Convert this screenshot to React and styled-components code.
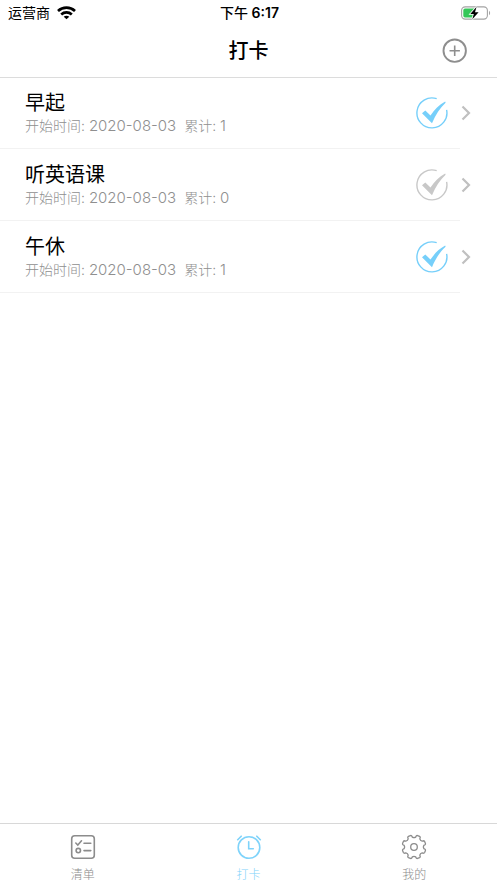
import React, { useState } from "react";
import styled, { createGlobalStyle } from "styled-components";

const GlobalStyle = createGlobalStyle`
  *, *::before, *::after { box-sizing: border-box; }
  body {
    margin: 0;
    background: #fff;
    color: #000;
    font-family: Inter, "Noto Sans CJK SC", sans-serif;
  }
  button { font: inherit; color: inherit; }
`;

const Screen = styled.div`
  display: flex;
  flex-direction: column;
  min-height: 100vh;
`;

const StatusBar = styled.div`
  display: grid;
  grid-template-columns: 1fr auto 1fr;
  align-items: center;
  height: 25px;
  padding: 0 6px 0 8px;
  font-size: 14px;
  line-height: 20px;
`;

const Carrier = styled.span`
  display: flex;
  align-items: center;
  gap: 7px;
`;

const Clock = styled.time`
  font-weight: 600;
  white-space: pre;
`;

const ClockPeriod = styled.span`
  font-weight: 500;
`;

const Battery = styled.span`
  display: flex;
  justify-content: flex-end;
`;

const Header = styled.header`
  display: grid;
  grid-template-columns: 1fr auto 1fr;
  align-items: center;
  height: 53px;
  padding: 0 29px;
  border-bottom: 1px solid #dcdcdc;
`;

const Title = styled.h1`
  grid-column: 2;
  margin: 0;
  font-size: 20px;
  line-height: 28px;
  font-weight: 500;
`;

const IconButton = styled.button`
  display: flex;
  justify-self: end;
  padding: 0;
  border: 0;
  background: none;
  color: ${(p) => p.$color};
  cursor: pointer;
`;

const List = styled.ul`
  flex: 1;
  margin: 0;
  padding: 0;
  list-style: none;
`;

const Item = styled.li`
  display: flex;
  align-items: center;
  height: 71px;
  margin-right: 37px;
  padding-left: 25px;
  border-bottom: 1px solid #f2f2f2;

  & + & { height: 72px; }
`;

const ItemText = styled.div`
  flex: 1;
  min-width: 0;
`;

const ItemName = styled.h2`
  margin: 0;
  font-size: 20px;
  line-height: 26px;
  font-weight: 400;
`;

const Meta = styled.p`
  display: flex;
  gap: 8px;
  margin: 0;
  color: #8f8f8f;
  font-size: 14px;
  line-height: 20px;
  font-weight: 300;
`;

const Value = styled.span`
  font-size: 15px;
`;

const Actions = styled.div`
  display: flex;
  align-items: center;
  gap: 12px;
  margin-right: -12px;
`;

const TabBar = styled.nav`
  display: flex;
  height: 60px;
  border-top: 1px solid #d8d8d8;
`;

const Tab = styled.button`
  display: flex;
  flex: 1;
  flex-direction: column;
  align-items: center;
  gap: 7px;
  padding: 10px 0 0;
  border: 0;
  background: none;
  color: ${(p) => (p.$active ? "#7fd3fa" : "#8c8c8c")};
  font-size: 12px;
  line-height: 16px;
  font-weight: 300;
  cursor: pointer;
`;

const WifiIcon = () => (
  <svg width="19" height="14" viewBox="0 0 19 14" fill="none" stroke="#000" strokeWidth="2.7" aria-hidden="true">
    <path d="M1 4.9C5.8.5 13.2.5 18 4.9" />
    <path d="M4.2 8.4c3-2.7 7.6-2.7 10.6 0" />
    <path d="M9.5 13.2 6.7 10.7c1.6-1.3 4-1.3 5.6 0z" fill="#000" stroke="none" />
  </svg>
);

const BatteryIcon = () => (
  <svg width="30" height="14" viewBox="0 0 30 14" aria-hidden="true">
    <rect x=".6" y=".9" width="25.8" height="12.2" rx="3.6" fill="none" stroke="#a3a3a3" strokeWidth="1.1" />
    <path d="M28 4.8c1.5.7 1.5 3.7 0 4.4z" fill="#a3a3a3" />
    <path d="M4 2.6h10v8.8H4A1.7 1.7 0 0 1 2.3 9.7V4.3A1.7 1.7 0 0 1 4 2.6z" fill="#35c759" />
    <path d="M15.6.8 9.3 8h3.5l-1.5 5.3L17.6 6.2H14z" fill="#000" stroke="#fff" strokeWidth="1.6" paintOrder="stroke" />
  </svg>
);

const PlusIcon = () => (
  <svg width="26" height="26" viewBox="0 0 26 26" fill="none" stroke="currentColor" aria-hidden="true">
    <circle cx="12.7" cy="12.7" r="11.2" strokeWidth="1.9" />
    <path d="M12.7 7.5v10.4M7.5 12.7h10.400" strokeWidth="1.6" />
  </svg>
);

const CheckIcon = () => (
  <svg width="32" height="32" viewBox="0 0 32 32" aria-hidden="true">
    <path d="M20.7 1.7A15 15 0 1 0 30.6 12.8" fill="none" stroke="currentColor" strokeWidth="1.4" />
    <path d="M6 16.2 9.3 13.6 14.5 18.6C18.5 12.5 23 8 29.2 4.6L29.6 5.7C24 10.8 19.5 17.6 16 26.2z" fill="currentColor" />
  </svg>
);

const ChevronIcon = () => (
  <svg width="12" height="16" viewBox="0 0 12 16" fill="none" stroke="currentColor" strokeWidth="2.2" aria-hidden="true">
    <path d="m2.500 1.500 6.500 6.500-6.500 6.500" />
  </svg>
);

const ListIcon = () => (
  <svg width="26" height="26" viewBox="0 0 26 26" fill="none" stroke="currentColor" strokeWidth="1.6" strokeLinecap="round" aria-hidden="true">
    <rect x="1.700" y="1.700" width="22.600" height="22.600" rx="3" />
    <path d="m5.800 9 2 2 3.700-4.200M14 9.300h6.800M14 16.600h6.800" />
    <circle cx="8.300" cy="16.600" r="2.200" />
  </svg>
);

const AlarmIcon = () => (
  <svg width="26" height="26" viewBox="0 0 26 26" fill="none" stroke="currentColor" strokeWidth="1.6" strokeLinecap="round" aria-hidden="true">
    <circle cx="13" cy="13.500" r="10.800" />
    <path d="M12.700 7.800v7h4.600M1.700 5.700l3.500-3.500M24.300 5.700l-3.500-3.500" />
  </svg>
);

const polar = (radius, degrees) => {
  const a = (degrees * Math.PI) / 180;
  return `${(13 + radius * Math.cos(a)).toFixed(2)} ${(13 + radius * Math.sin(a)).toFixed(2)}`;
};

const gearPath =
  Array.from({ length: 8 }, (_, i) => {
    const a = i * 45 + 22.5;
    return [
      `${i ? "L" : "M"}${polar(10, a - 13)}`,
      `L${polar(11.3, a - 11)}`,
      `Q${polar(12, a - 9)} ${polar(12, a - 5)}`,
      `L${polar(12, a + 5)}`,
      `Q${polar(12, a + 9)} ${polar(11.3, a + 11)}`,
      `L${polar(10, a + 13)}`,
      `Q${polar(8.8, a + 22.5)} ${polar(10, a + 32)}`,
    ].join("");
  }).join("") + "Z";

const GearIcon = () => (
  <svg width="26" height="26" viewBox="0 0 26 26" fill="none" stroke="currentColor" strokeWidth="1.3" strokeLinejoin="round" aria-hidden="true">
    <path d={gearPath} />
    <circle cx="13" cy="13" r="3.3" />
  </svg>
);

const initialHabits = [
  { name: "早起", start: "2020-08-03", total: 1, done: true },
  { name: "听英语课", start: "2020-08-03", total: 0, done: false },
  { name: "午休", start: "2020-08-03", total: 1, done: true },
];

const tabs = [
  { label: "清单", Icon: ListIcon },
  { label: "打卡", Icon: AlarmIcon },
  { label: "我的", Icon: GearIcon },
];

export default function App() {
  const [habits, setHabits] = useState(initialHabits);
  const [active, setActive] = useState("打卡");

  const toggle = (name) =>
    setHabits((all) =>
      all.map((h) =>
        h.name === name ? { ...h, done: !h.done, total: h.total + (h.done ? -1 : 1) } : h
      )
    );

  return (
    <Screen>
      <GlobalStyle />
      <StatusBar>
        <Carrier>运营商<WifiIcon /></Carrier>
        <Clock><ClockPeriod>下午</ClockPeriod> 6:17</Clock>
        <Battery><BatteryIcon /></Battery>
      </StatusBar>
      <Header>
        <Title>打卡</Title>
        <IconButton type="button" $color="#8e8e8e" aria-label="添加"><PlusIcon /></IconButton>
      </Header>
      <List>
        {habits.map((h) => (
          <Item key={h.name}>
            <ItemText>
              <ItemName>{h.name}</ItemName>
              <Meta>
                <span>开始时间: <Value>{h.start}</Value></span>
                <span>累计: <Value>{h.total}</Value></span>
              </Meta>
            </ItemText>
            <Actions>
              <IconButton
                type="button"
                $color={h.done ? "#76cffa" : "#c8c8c8"}
                aria-label={`${h.name} 打卡`}
                aria-pressed={h.done}
                onClick={() => toggle(h.name)}
              >
                <CheckIcon />
              </IconButton>
              <IconButton type="button" $color="#c0c0c0" aria-label={`${h.name} 详情`}>
                <ChevronIcon />
              </IconButton>
            </Actions>
          </Item>
        ))}
      </List>
      <TabBar>
        {tabs.map(({ label, Icon }) => (
          <Tab
            key={label}
            type="button"
            $active={label === active}
            aria-current={label === active ? "page" : undefined}
            onClick={() => setActive(label)}
          >
            <Icon />
            {label}
          </Tab>
        ))}
      </TabBar>
    </Screen>
  );
}
